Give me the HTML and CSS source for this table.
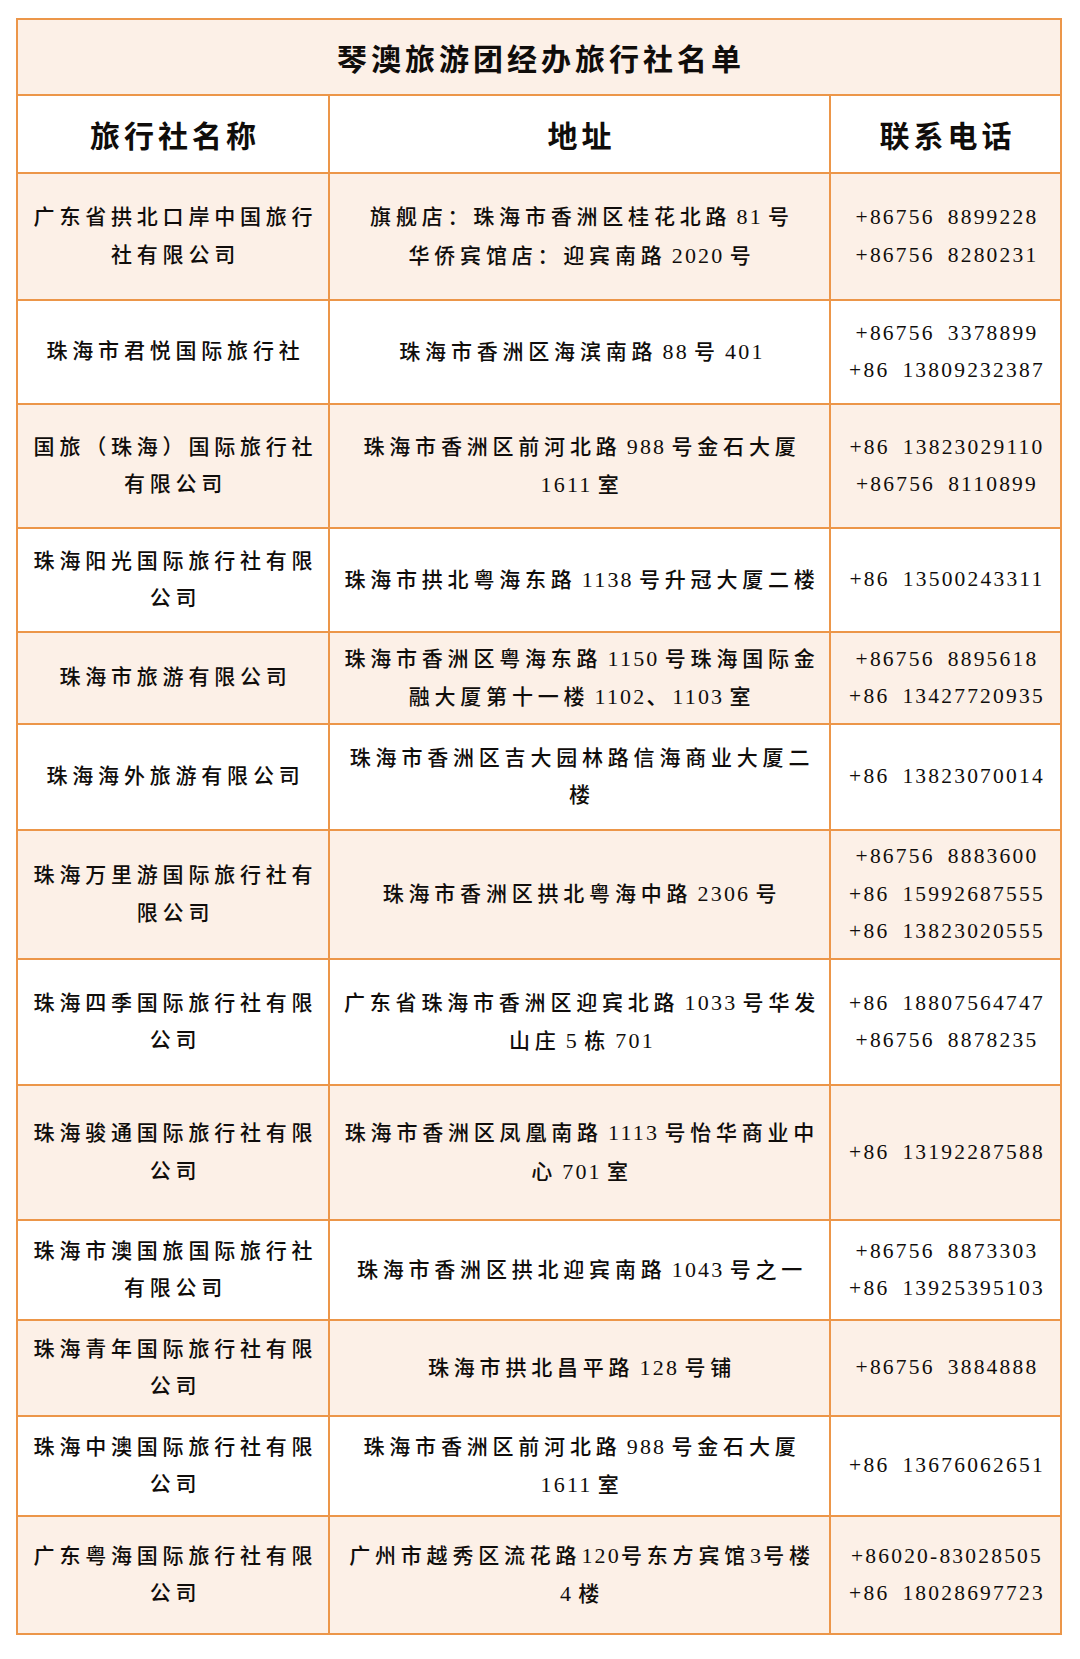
FILE: index.html
```html
<!DOCTYPE html>
<html lang="zh-CN">
<head>
<meta charset="utf-8">
<title>琴澳旅游团经办旅行社名单</title>
<link rel="stylesheet" href="styles.css">
</head>
<body>
<div class="sheet">
  <div class="row alt"><div class="cell title"><p class="tx">琴澳旅游团经办旅行社名单</p></div></div>
  <div class="row head">
    <div class="cell"><p class="tx">旅行社名称</p></div>
    <div class="cell"><p class="tx">地址</p></div>
    <div class="cell"><p class="tx">联系电话</p></div>
  </div>

  <div class="row alt">
    <div class="cell"><p class="tx">广东省拱北口岸中国旅行<br>社有限公司</p></div>
    <div class="cell"><p class="tx">旗舰店：珠海市香洲区桂花北路<span class="n"> 81 </span>号<br>华侨宾馆店：迎宾南路<span class="n"> 2020 </span>号</p></div>
    <div class="cell ph"><p class="tx">+86756 8899228<br>+86756 8280231</p></div>
  </div>

  <div class="row">
    <div class="cell"><p class="tx">珠海市君悦国际旅行社</p></div>
    <div class="cell"><p class="tx">珠海市香洲区海滨南路<span class="n"> 88 </span>号<span class="n"> 401</span></p></div>
    <div class="cell ph"><p class="tx">+86756 3378899<br>+86 13809232387</p></div>
  </div>

  <div class="row alt">
    <div class="cell"><p class="tx">国旅（珠海）国际旅行社<br>有限公司</p></div>
    <div class="cell"><p class="tx">珠海市香洲区前河北路<span class="n"> 988 </span>号金石大厦<br><span class="n">1611 </span>室</p></div>
    <div class="cell ph"><p class="tx">+86 13823029110<br>+86756 8110899</p></div>
  </div>

  <div class="row">
    <div class="cell"><p class="tx">珠海阳光国际旅行社有限<br>公司</p></div>
    <div class="cell"><p class="tx">珠海市拱北粤海东路<span class="n"> 1138 </span>号升冠大厦二楼</p></div>
    <div class="cell ph"><p class="tx">+86 13500243311</p></div>
  </div>

  <div class="row alt">
    <div class="cell"><p class="tx">珠海市旅游有限公司</p></div>
    <div class="cell"><p class="tx">珠海市香洲区粤海东路<span class="n"> 1150 </span>号珠海国际金<br>融大厦第十一楼<span class="n"> 1102</span>、<span class="n">1103 </span>室</p></div>
    <div class="cell ph"><p class="tx">+86756 8895618<br>+86 13427720935</p></div>
  </div>

  <div class="row">
    <div class="cell"><p class="tx">珠海海外旅游有限公司</p></div>
    <div class="cell"><p class="tx">珠海市香洲区吉大园林路信海商业大厦二<br>楼</p></div>
    <div class="cell ph"><p class="tx">+86 13823070014</p></div>
  </div>

  <div class="row alt">
    <div class="cell"><p class="tx">珠海万里游国际旅行社有<br>限公司</p></div>
    <div class="cell"><p class="tx">珠海市香洲区拱北粤海中路<span class="n"> 2306 </span>号</p></div>
    <div class="cell ph"><p class="tx">+86756 8883600<br>+86 15992687555<br>+86 13823020555</p></div>
  </div>

  <div class="row">
    <div class="cell"><p class="tx">珠海四季国际旅行社有限<br>公司</p></div>
    <div class="cell"><p class="tx">广东省珠海市香洲区迎宾北路<span class="n"> 1033 </span>号华发<br>山庄<span class="n"> 5 </span>栋<span class="n"> 701</span></p></div>
    <div class="cell ph"><p class="tx">+86 18807564747<br>+86756 8878235</p></div>
  </div>

  <div class="row alt">
    <div class="cell"><p class="tx">珠海骏通国际旅行社有限<br>公司</p></div>
    <div class="cell"><p class="tx">珠海市香洲区凤凰南路<span class="n"> 1113 </span>号怡华商业中<br>心<span class="n"> 701 </span>室</p></div>
    <div class="cell ph"><p class="tx">+86 13192287588</p></div>
  </div>

  <div class="row">
    <div class="cell"><p class="tx">珠海市澳国旅国际旅行社<br>有限公司</p></div>
    <div class="cell"><p class="tx">珠海市香洲区拱北迎宾南路<span class="n"> 1043 </span>号之一</p></div>
    <div class="cell ph"><p class="tx">+86756 8873303<br>+86 13925395103</p></div>
  </div>

  <div class="row alt">
    <div class="cell"><p class="tx">珠海青年国际旅行社有限<br>公司</p></div>
    <div class="cell"><p class="tx">珠海市拱北昌平路<span class="n"> 128 </span>号铺</p></div>
    <div class="cell ph"><p class="tx">+86756 3884888</p></div>
  </div>

  <div class="row">
    <div class="cell"><p class="tx">珠海中澳国际旅行社有限<br>公司</p></div>
    <div class="cell"><p class="tx">珠海市香洲区前河北路<span class="n"> 988 </span>号金石大厦<br><span class="n">1611 </span>室</p></div>
    <div class="cell ph"><p class="tx">+86 13676062651</p></div>
  </div>

  <div class="row alt">
    <div class="cell"><p class="tx">广东粤海国际旅行社有限<br>公司</p></div>
    <div class="cell"><p class="tx">广州市越秀区流花路<span class="n">120</span>号东方宾馆<span class="n">3</span>号楼<br><span class="n">4 </span>楼</p></div>
    <div class="cell ph"><p class="tx">+86020-83028505<br>+86 18028697723</p></div>
  </div>
</div>
</body>
</html>
```
FILE: styles.css
```css
html, body {
  margin: 0;
  padding: 0;
  background: #ffffff;
}

body {
  width: 1080px;
  height: 1659px;
  overflow: hidden;
}

.sheet {
  display: grid;
  grid-template-columns: 312px 501px 231px;
  grid-template-rows: 76px 78px 127px 104px 124px 104px 92px 106px 129px 126px 135px 100px 96px 100px 118px;
  width: 1046px;
  margin: 18px 0 0 16px;
  border-left: 2px solid #ec9649;
  border-top: 2px solid #ec9649;
  box-sizing: border-box;
  color: #100d0b;
}

.row {
  display: contents;
}

.cell {
  box-sizing: border-box;
  border-right: 2px solid #ec9649;
  border-bottom: 2px solid #ec9649;
  display: flex;
  align-items: center;
  justify-content: center;
  padding: 0 0 0 5px;
  font-family: "Liberation Serif", "Noto Sans CJK SC", serif;
  font-size: 21px;
  font-weight: 500;
  letter-spacing: 4.8px;
  line-height: 37.5px;
  background: #ffffff;
}

.tx {
  margin: 0;
  text-align: center;
  white-space: nowrap;
}

.alt .cell {
  background: #fcf0e7;
}

.title {
  grid-column: 1 / -1;
  font-family: "Noto Sans CJK SC", sans-serif;
  font-size: 30px;
  font-weight: 700;
  letter-spacing: 4px;
  padding-left: 4px;
  padding-top: 2px;
}

.head .cell {
  font-family: "Noto Sans CJK SC", sans-serif;
  font-size: 30px;
  font-weight: 700;
  letter-spacing: 4px;
  padding-left: 4px;
  padding-top: 2px;
}

.n {
  font-size: 22px;
  letter-spacing: 2.2px;
  word-spacing: -2.5px;
}

.ph {
  font-size: 21.5px;
  letter-spacing: 2.2px;
  word-spacing: 5.5px;
  font-weight: 400;
  padding-left: 3px;
}
```
